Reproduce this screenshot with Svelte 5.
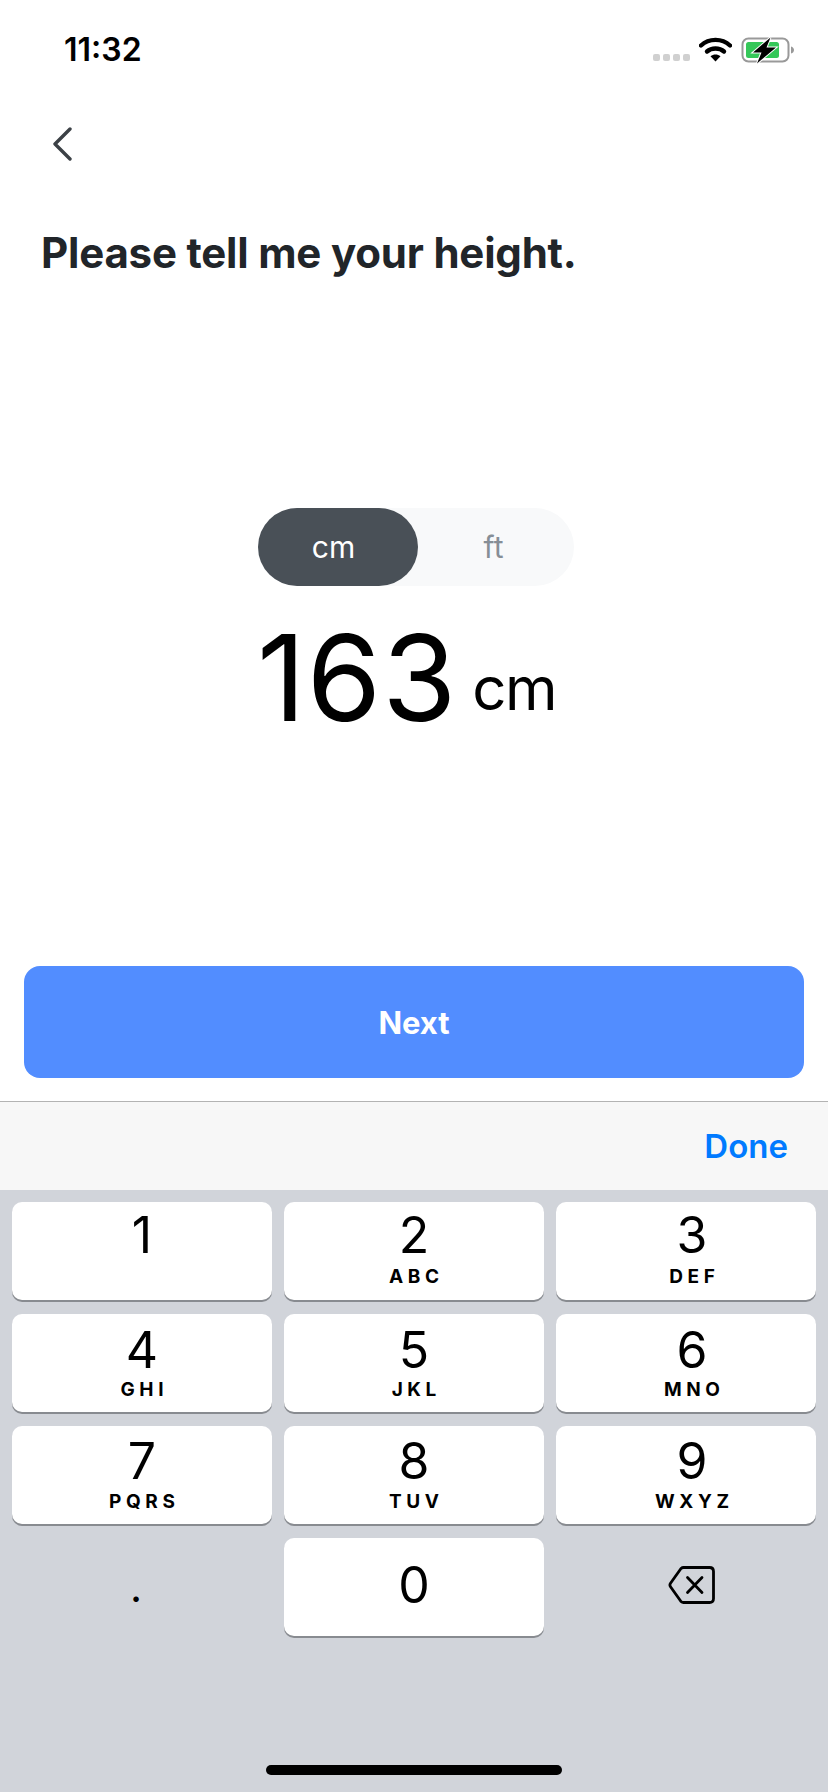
<script>
  const keys = [
    { d: "1", l: "" },
    { d: "2", l: "ABC" },
    { d: "3", l: "DEF" },
    { d: "4", l: "GHI" },
    { d: "5", l: "JKL" },
    { d: "6", l: "MNO" },
    { d: "7", l: "PQRS" },
    { d: "8", l: "TUV" },
    { d: "9", l: "WXYZ" },
  ];
</script>

<div class="screen">
  <header class="status">
    <span class="time">11:32</span>
    <div class="indicators">
      <div class="dots"><i></i><i></i><i></i><i></i></div>
      <svg class="wifi" width="33" height="25" viewBox="0 0 33 25" aria-hidden="true">
        <path d="M2 8.5C10 1 23 1 31 8.5" fill="none" stroke="#000" stroke-width="4.4" stroke-linecap="round" />
        <path d="M8 14.5C12.500 10.500 20.500 10.500 25 14.500" fill="none" stroke="#000" stroke-width="4.4" stroke-linecap="round" />
        <path d="M11.500 19.200L16.500 24.500L21.500 19.200C18.500 16.800 14.500 16.800 11.500 19.200Z" fill="#000" />
      </svg>
      <svg class="battery" width="54" height="27" viewBox="0 0 54 27" aria-hidden="true">
        <rect x="1.500" y="1.500" width="46" height="23" rx="6" fill="none" stroke="#999" stroke-width="2" />
        <rect x="5" y="5" width="33" height="16" rx="2.500" fill="#35c759" />
        <path d="M50 9.500C52 10 53 11.500 53 13C53 14.500 52 16 50 16.500Z" fill="#999" />
        <path d="M29.500 0.500L12 15.500H20.500L16 26.500L35 10.500H25.500Z" fill="#000" stroke="#fff" stroke-width="2" paint-order="stroke" />
      </svg>
    </div>
  </header>

  <nav class="nav">
    <svg width="20" height="34" viewBox="0 0 20 34" aria-hidden="true">
      <path d="M18 2L3 17L18 32" fill="none" stroke="#3c4146" stroke-width="3.400" stroke-linecap="round" stroke-linejoin="round" />
    </svg>
  </nav>

  <h1>Please tell me your height.</h1>

  <main class="measure">
    <div class="toggle">
      <span class="opt active">cm</span>
      <span class="opt">ft</span>
    </div>
    <div class="value">
      <span class="num">163</span>
      <span class="unit">cm</span>
    </div>
  </main>

  <div class="action">
    <button class="next">Next</button>
  </div>

  <div class="toolbar">
    <span class="done">Done</span>
  </div>

  <div class="keyboard">
    <div class="pad">
      {#each keys as k}
        <div class="key">
          <span class="digit">{k.d}</span>
          {#if k.l}<span class="letters">{k.l}</span>{/if}
        </div>
      {/each}
      <div class="key blank"><span class="dot">.</span></div>
      <div class="key zero"><span class="digit">0</span></div>
      <div class="key blank">
        <svg width="48" height="40" viewBox="0 0 48 40" aria-hidden="true">
          <path d="M15.500 2.500H41.500C44 2.500 45.500 4 45.500 6.500V33.500C45.500 36 44 37.500 41.500 37.500H15.500C14.500 37.500 13.700 37.100 13 36.500L2.500 21.700C1.800 20.700 1.800 19.300 2.500 18.300L13 3.500C13.700 2.900 14.500 2.500 15.500 2.500Z" fill="none" stroke="#000" stroke-width="2.800" stroke-linejoin="round" />
          <path d="M19.500 12.500L34 27.500M34 12.500L19.500 27.500" fill="none" stroke="#000" stroke-width="2.800" stroke-linecap="round" />
        </svg>
      </div>
    </div>
    <div class="home"></div>
  </div>
</div>

<style>
  :global(body) {
    margin: 0;
    background: #fff;
  }

  .screen {
    width: 828px;
    height: 1792px;
    display: flex;
    flex-direction: column;
    font-family: Inter, "Liberation Sans", sans-serif;
    overflow: hidden;
  }

  .status {
    height: 98px;
    box-sizing: border-box;
    padding: 30px 33px 0 64px;
    display: flex;
    justify-content: space-between;
    align-items: flex-start;
  }

  .time {
    font-size: 32px;
    line-height: 40px;
    font-weight: 600;
    color: #000;
  }

  .indicators {
    display: flex;
    align-items: flex-start;
    padding-top: 7px;
  }

  .dots {
    display: flex;
    gap: 3px;
    margin-top: 17px;
    margin-right: 9px;
  }

  .dots i {
    width: 7px;
    height: 7px;
    border-radius: 2px;
    background: #d0d0d0;
  }

  .wifi {
    margin-right: 9px;
  }

  .nav {
    height: 34px;
    margin-top: 29px;
    padding-left: 52px;
  }

  .nav svg {
    display: block;
  }

  h1 {
    margin: 67px 0 0 41px;
    font-size: 42px;
    line-height: 50px;
    font-weight: 700;
    letter-spacing: -0.2px;
    color: #212529;
  }

  .measure {
    flex: 1;
    display: flex;
    flex-direction: column;
    align-items: center;
    padding-top: 230px;
  }

  .toggle {
    width: 316px;
    height: 78px;
    margin-left: 3px;
    display: flex;
    background: #f8f9fa;
    border-radius: 39px;
  }

  .opt {
    flex: 1;
    box-sizing: border-box;
    padding-right: 4px;
    display: flex;
    align-items: center;
    justify-content: center;
    font-size: 30px;
    color: #868e96;
    border-radius: 39px;
  }

  .opt.active {
    flex: 0 0 160px;
    padding-right: 8px;
    background: #495057;
    color: #fff;
  }

  .value {
    display: flex;
    align-items: flex-end;
    justify-content: center;
    gap: 15px;
    margin-top: 21px;
    padding-right: 15px;
    color: #000;
  }

  .num {
    font-size: 120px;
    line-height: 142px;
    font-weight: 400;
    letter-spacing: 1px;
  }

  .unit {
    font-size: 60px;
    line-height: 60px;
    font-weight: 400;
    letter-spacing: -1.500px;
    margin-bottom: 31px;
  }

  .action {
    padding: 0 24px;
    margin-bottom: 23px;
  }

  .next {
    display: block;
    width: 100%;
    height: 112px;
    border: 0;
    border-radius: 16px;
    background: #528dff;
    color: #fff;
    font-family: inherit;
    font-size: 31px;
    font-weight: 700;
  }

  .toolbar {
    height: 88px;
    border-top: 1px solid #b3b3b3;
    background: #f7f7f7;
    display: flex;
    align-items: center;
    justify-content: flex-end;
    padding-right: 40px;
  }

  .done {
    font-size: 33px;
    font-weight: 600;
    color: #007aff;
  }

  .keyboard {
    height: 602px;
    box-sizing: border-box;
    background: #d1d4da;
    padding: 12px 12px 0;
    position: relative;
  }

  .pad {
    display: grid;
    grid-template-columns: repeat(3, 260px);
    grid-auto-rows: 98px;
    gap: 14px 12px;
  }

  .key {
    box-sizing: border-box;
    background: #fff;
    border-radius: 10px;
    box-shadow: 0 2px 0 #888b90;
    display: flex;
    flex-direction: column;
    align-items: center;
    color: #000;
  }

  /* right column sits a little off centre on the real keyboard */
  .key:nth-child(3n) {
    padding-left: 12px;
  }

  .key.zero {
    justify-content: center;
    padding-bottom: 4px;
  }

  .key.blank {
    background: transparent;
    box-shadow: none;
    justify-content: center;
  }

  .key.blank svg {
    margin-bottom: 4px;
  }

  .digit {
    font-size: 50px;
    line-height: 60px;
    font-weight: 400;
    margin-top: 3px;
  }

  .zero .digit {
    margin-top: 0;
  }

  .letters {
    font-size: 19px;
    line-height: 20px;
    font-weight: 700;
    letter-spacing: 4.600px;
    margin-right: -4.600px;
    margin-top: 2px;
  }

  /* second and third rows have their digit a touch lower */
  .key:nth-child(n + 4):nth-child(-n + 6) .digit {
    margin-top: 6px;
  }

  .key:nth-child(n + 4):nth-child(-n + 6) .letters {
    margin-top: 0;
  }

  .key:nth-child(n + 7):nth-child(-n + 9) .digit {
    margin-top: 5px;
  }

  .key:nth-child(n + 7):nth-child(-n + 9) .letters {
    margin-top: 1px;
  }

  .dot {
    font-size: 42px;
    line-height: 50px;
    margin-right: 12px;
  }

  .home {
    position: absolute;
    left: 266px;
    bottom: 17px;
    width: 296px;
    height: 10px;
    border-radius: 5px;
    background: #000;
  }
</style>
